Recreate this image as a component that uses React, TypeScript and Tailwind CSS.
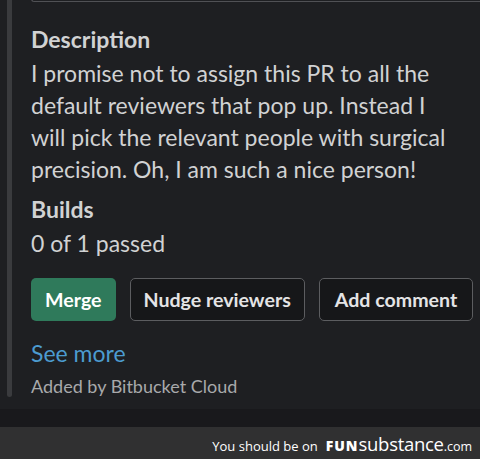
export default function App() {
  const lato = { fontFamily: 'Lato, "Noto Sans", sans-serif' };
  const open = { fontFamily: '"Open Sans", sans-serif' };
  return (
    <div className="w-[480px] h-[459px] overflow-hidden bg-[#1e1f22] flex flex-col text-[#d1d2d3]" style={lato}>
      <div className="flex h-[409px]">
        {/* thread bar */}
        <div className="w-[5px] ml-[7px] h-[397px] bg-[#3a3b3e] rounded-b-full" />
        <div className="flex-1 pl-[19px] flex flex-col min-w-0">
          {/* bottom of previous attachment box */}
          <div className="h-[3px] -mt-[1px] border-b border-l border-[#505155] rounded-bl-[6px] mr-[-20px]" />
          <div className="pt-[21px] text-[23px] leading-[32px] whitespace-nowrap">
            <div className="font-bold">Description</div>
            <p className="mt-[2px]">
              I promise not to assign this PR to all the
              <br />
              default reviewers that pop up. Instead I
              <br />
              will pick the relevant people with surgical
              <br />
              precision. Oh, I am such a nice person!
            </p>
            <div className="font-bold mt-[8px]">Builds</div>
            <div className="mt-[2px]">0 of 1 passed</div>
          </div>
          <div className="flex gap-[14px] mt-[19px]">
            <button className="h-[43px] px-[14px] rounded-[5px] bg-[#2f7a5b] text-white font-bold text-[19.6px]">Merge</button>
            <button className="h-[43px] px-[13px] rounded-[5px] bg-[#161719] border border-[#5c5d60] font-bold text-[19.6px] text-[#e4e4e5]">Nudge reviewers</button>
            <button className="h-[43px] px-[15px] rounded-[5px] bg-[#161719] border border-[#5c5d60] font-bold text-[19.6px] text-[#e4e4e5]">Add comment</button>
          </div>
          <div className="mt-[17px] text-[23px] leading-[30px] text-[#4c9bd0]">See more</div>
          <div className="mt-[5px] text-[18px] leading-[26px] text-[#a8a9ab]">Added by Bitbucket Cloud</div>
        </div>
      </div>
      <div className="h-[18px] bg-[#19191c]" />
      <div className="flex-1 bg-[#303031] flex items-center justify-end pr-[8px] pt-[1px]" style={open}>
        <div className="flex items-baseline">
          <span className="text-[13px] text-white mr-[8px]">You should be on</span>
          <span className="text-[14px] font-black text-white tracking-[1px]">FUN</span>
          <span className="text-[18.5px] text-white tracking-[-0.3px]">substance</span>
          <span className="text-[12.5px] text-white">.com</span>
        </div>
      </div>
    </div>
  );
}
